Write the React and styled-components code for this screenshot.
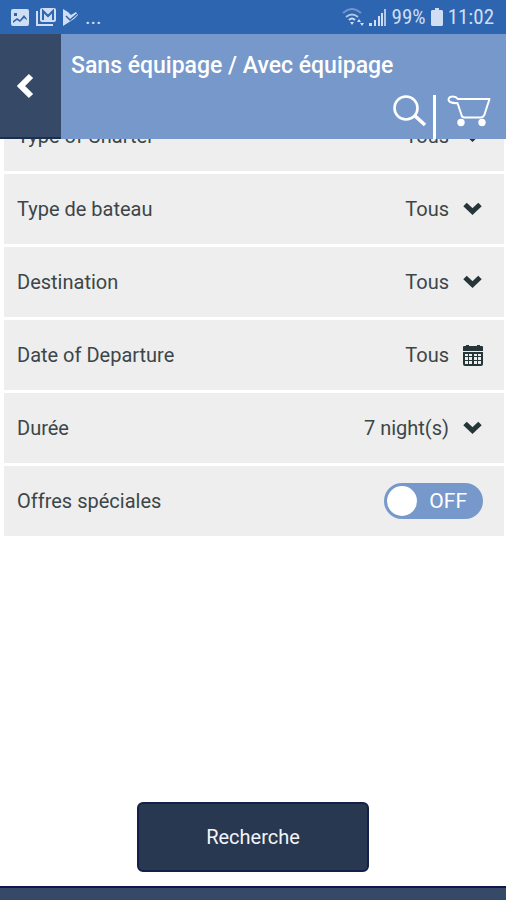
import React, { useState } from 'react'
import styled, { createGlobalStyle } from 'styled-components'

const GlobalStyle = createGlobalStyle`
  * {
    box-sizing: border-box;
  }

  body {
    margin: 0;
    background: #ffffff;
    font-family: Roboto, "Liberation Sans", sans-serif;
    color: #3c4648;
  }

  button, select, input {
    font: inherit;
    color: inherit;
  }
`

const Page = styled.div`
  display: flex;
  flex-direction: column;
  min-height: 100vh;
`

const StatusBar = styled.div`
  display: flex;
  align-items: center;
  justify-content: space-between;
  height: 34px;
  padding: 0 12px 0 11px;
  background: #2d65b1;
  color: #cfdef3;
  z-index: 1;
`

const StatusGroup = styled.div`
  display: flex;
  align-items: center;
  gap: ${({ $gap }) => $gap}px;
  font-family: "Roboto Condensed", "Liberation Sans Narrow", Roboto, sans-serif;
  font-size: 21px;
  line-height: 34px;
`

const Header = styled.header`
  display: flex;
  height: 105px;
  background: #7698cb;
  color: #ffffff;
  z-index: 1;
`

const BackButton = styled.button`
  display: flex;
  align-items: center;
  justify-content: center;
  width: 61px;
  padding: 0 10px 0 0;
  border: 0;
  border-bottom: 2px solid #1c2f50;
  background: #364a68;
  color: #ffffff;
`

const HeaderContent = styled.div`
  flex: 1;
  display: flex;
  flex-direction: column;
  justify-content: space-between;
  padding: 18px 14px 0 10px;
`

const Title = styled.h1`
  margin: 0;
  font-size: 23px;
  font-weight: 500;
  line-height: 28px;
`

const HeaderActions = styled.div`
  display: flex;
  justify-content: flex-end;
  height: 44px;
`

const Separator = styled.span`
  width: 3px;
  margin: 0 11px 0 6px;
  background: #ffffff;
`

const IconButton = styled.button`
  display: flex;
  padding: 0;
  border: 0;
  background: none;
  color: #ffffff;
`

const Form = styled.form`
  flex: 1;
  display: flex;
  flex-direction: column;
`

/* the list is scrolled a little way under the header */
const Fields = styled.div`
  display: grid;
  gap: 3px;
  margin-top: -38px;
  padding: 0 2px 0 4px;
`

const Row = styled.div`
  display: flex;
  align-items: center;
  justify-content: space-between;
  height: 70px;
  padding: 0 21px 0 13px;
  background: #eeeeee;
`

const Label = styled.label`
  font-size: 20px;
  line-height: 28px;
`

const Control = styled.div`
  display: grid;
  align-items: center;
  justify-items: end;
  font-size: 20px;

  > * {
    grid-area: 1 / 1;
  }

  svg {
    pointer-events: none;
  }
`

const Select = styled.select`
  appearance: none;
  padding: 0 34px 0 0;
  border: 0;
  background: none;
  line-height: 28px;
  text-align-last: right;
`

const DateButton = styled.button`
  padding: 0 34px 0 0;
  border: 0;
  background: none;
  line-height: 28px;
`

const Switch = styled.label`
  display: flex;
  align-items: center;
  justify-content: space-between;
  flex-direction: ${({ $on }) => ($on ? 'row-reverse' : 'row')};
  width: 99px;
  height: 36px;
  padding: ${({ $on }) => ($on ? '0 3px 0 16px' : '0 16px 0 3px')};
  border-radius: 18px;
  background: #7698cb;
  color: #ffffff;
  font-size: 21px;
`

const SwitchInput = styled.input`
  appearance: none;
  width: 30px;
  height: 30px;
  margin: 0;
  border-radius: 50%;
  background: #ffffff;
`

const Submit = styled.button`
  align-self: center;
  width: 46%;
  height: 70px;
  margin: auto 0 14px;
  border: 2px solid #14204a;
  border-radius: 6px;
  background: #293851;
  color: #f2f4f8;
  font-size: 20px;
`

const BottomBar = styled.footer`
  height: 14px;
  border-top: 2px solid #13164c;
  background: #364a68;
`

const ChevronIcon = () => (
  <svg width="20" height="14" viewBox="0 0 20 14" fill="none" stroke="#263638" strokeWidth="5">
    <path d="M2 2.5 9.500 9.5l7.500-7" />
  </svg>
)

const CalendarIcon = () => (
  <svg width="20" height="21" viewBox="0 0 20 21" fill="#263638">
    <path d="M3 0h3v1h8V0h3v1h2q1 0 1 1v4H0V2q0-1 1-1h2z" />
    <path
      fillRule="evenodd"
      d="M0 7h20v12q0 2-2 2H2q-2 0-2-2zM2 9v2h3V9zm4 0v2h3V9zm5 0v2h3V9zm4 0v2h3V9zM2 12v3h3v-3zm4 0v3h3v-3zm5 0v3h3v-3zm4 0v3h3v-3zM2 16v3h3v-3zm4 0v3h3v-3zm5 0v3h3v-3zm4 0v3h3v-3z"
    />
  </svg>
)

const BackIcon = () => (
  <svg width="18" height="26" viewBox="0 0 18 26" fill="none" stroke="currentColor" strokeWidth="6">
    <path d="M14 3 4 13l10 10" />
  </svg>
)

const SearchIcon = () => (
  <svg width="34" height="34" viewBox="0 0 34 34" fill="none" stroke="currentColor">
    <circle cx="13" cy="13" r="11.500" strokeWidth="2.600" />
    <path d="m21 20 11 10" strokeWidth="3.600" />
  </svg>
)

const CartIcon = () => (
  <svg width="45" height="34" viewBox="0 0 45 34" fill="none" stroke="currentColor" strokeWidth="2">
    <path strokeLinejoin="round" d="M10 4H42.500L37.500 19.500Q36.500 22.500 33.500 22.500H17.500Q15 22.500 14.500 20L10.500 8Q7 8.500 3 7 0 4.500 3 2 8 .500 11 4" />
    <circle cx="14" cy="27.500" r="3.700" fill="currentColor" stroke="none" />
    <circle cx="35" cy="27.500" r="3.700" fill="currentColor" stroke="none" />
  </svg>
)

const PictureIcon = () => (
  <svg width="18" height="17" viewBox="0 0 18 17">
    <rect width="18" height="17" rx="2" fill="currentColor" />
    <path d="m2 12 4-3 3 2 4-5 3 4v1l-3-2-4 4-3-2-4 3zM3 4h3v3H3z" fill="#2d65b1" />
  </svg>
)

const MailIcon = () => (
  <svg width="20" height="18" viewBox="0 0 20 18" fill="none" stroke="currentColor" strokeWidth="2">
    <path d="M1 3v14h16" />
    <rect x="4" y="0" width="16" height="14" rx="2" fill="currentColor" stroke="none" />
    <path d="M7 12V3l5 5 5-5v9" stroke="#2d65b1" />
  </svg>
)

const PlayIcon = () => (
  <svg width="15" height="17" viewBox="0 0 15 17">
    <path d="M0 0 5 3l3 3 5-3 2 3-4 4L0 17z" fill="currentColor" />
    <path d="m3 7 4 4 7-6" fill="none" stroke="#2d65b1" strokeWidth="1.500" />
  </svg>
)

const WifiIcon = () => (
  <svg width="22" height="18" viewBox="0 0 22 18" fill="none" stroke="currentColor" strokeWidth="2">
    <path d="M1 5q9-8 18 0" opacity="0.4" />
    <path d="M4 9q6-5 12 0" opacity="0.8" />
    <path d="M7 12q3-3 6 0" />
    <path d="m8 14 2 3 2-3zM15 14l2-3 2 3zM18 15l2 3 2-3z" fill="currentColor" stroke="none" />
  </svg>
)

const SignalIcon = () => (
  <svg width="18" height="17" viewBox="0 0 18 17" fill="currentColor">
    <path d="M0 14h3v3H0zM5 11h2v6H5zM9 7h2v10H9zM12 4h2v13h-2z" />
    <path d="M15 0h2v17h-2z" opacity="0.8" />
  </svg>
)

const BatteryIcon = () => (
  <svg width="12" height="18" viewBox="0 0 12 18" fill="currentColor">
    <path d="M4 0h4v2h3l1 1v14l-1 1H1l-1-1V3l1-1h3z" />
  </svg>
)

const SelectField = ({ id, label, options }) => (
  <Row>
    <Label htmlFor={id}>{label}</Label>
    <Control>
      <Select id={id}>
        {options.map(option => <option key={option}>{option}</option>)}
      </Select>
      <ChevronIcon />
    </Control>
  </Row>
)

const App = () => {
  const [special, setSpecial] = useState(false)

  return (
    <Page>
      <GlobalStyle />
      <StatusBar>
        <StatusGroup $gap={7}>
          <PictureIcon />
          <MailIcon />
          <PlayIcon />
          <span>...</span>
        </StatusGroup>
        <StatusGroup $gap={5}>
          <WifiIcon />
          <SignalIcon />
          <span>99%</span>
          <BatteryIcon />
          <span>11:02</span>
        </StatusGroup>
      </StatusBar>
      <Header>
        <BackButton type="button" aria-label="Retour">
          <BackIcon />
        </BackButton>
        <HeaderContent>
          <Title>Sans équipage / Avec équipage</Title>
          <HeaderActions>
            <IconButton type="button" aria-label="Recherche">
              <SearchIcon />
            </IconButton>
            <Separator />
            <IconButton type="button" aria-label="Panier">
              <CartIcon />
            </IconButton>
          </HeaderActions>
        </HeaderContent>
      </Header>
      <Form onSubmit={e => e.preventDefault()}>
        <Fields>
          <SelectField id="charter" label="Type of Charter" options={['Tous']} />
          <SelectField id="boat" label="Type de bateau" options={['Tous']} />
          <SelectField id="destination" label="Destination" options={['Tous']} />
          <Row>
            <Label htmlFor="departure">Date of Departure</Label>
            <Control>
              <DateButton type="button" id="departure">Tous</DateButton>
              <CalendarIcon />
            </Control>
          </Row>
          <SelectField id="duration" label="Durée" options={['7 night(s)']} />
          <Row>
            <Label htmlFor="special">Offres spéciales</Label>
            <Switch $on={special}>
              <SwitchInput
                id="special"
                type="checkbox"
                role="switch"
                checked={special}
                onChange={e => setSpecial(e.target.checked)}
              />
              {special ? 'ON' : 'OFF'}
            </Switch>
          </Row>
        </Fields>
        <Submit type="submit">Recherche</Submit>
      </Form>
      <BottomBar />
    </Page>
  )
}

export default App
